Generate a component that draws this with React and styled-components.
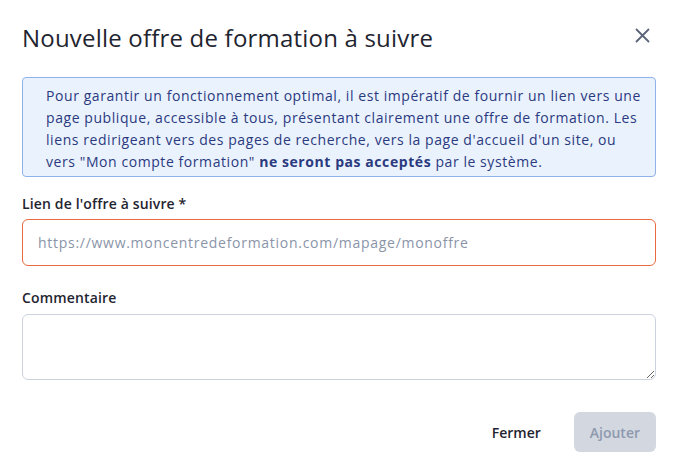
import React from 'react';
import styled, { createGlobalStyle } from 'styled-components';

const GlobalStyle = createGlobalStyle`
  html, body {
    margin: 0;
    padding: 0;
    background: #ffffff;
  }
  * {
    box-sizing: border-box;
  }
`;

const Modal = styled.div`
  width: 678px;
  height: 472px;
  padding: 19px 22px 0;
  font-family: 'Open Sans', 'Noto Sans', sans-serif;
  color: #1f2530;
  background: #fff;
`;

const Header = styled.div`
  display: flex;
  align-items: center;
  justify-content: space-between;
  height: 36px;
`;

const Title = styled.h2`
  margin: 0;
  font-size: 24px;
  font-weight: 400;
  letter-spacing: 0.2px;
  color: #1f2530;
`;

const CloseButton = styled.button`
  border: 0;
  background: none;
  padding: 0;
  width: 20px;
  height: 20px;
  margin: -4px 4px 0 0;
  color: #5b6478;
  display: flex;
  align-items: center;
  justify-content: center;
  cursor: pointer;
`;

const InfoBox = styled.div`
  margin-top: 22px;
  padding: 7px 6px 3px 23px;
  background: #eaf2fe;
  border: 1px solid #8fb1ea;
  border-radius: 4px;
  color: #2b3a7e;
  font-size: 14px;
  line-height: 22px;
  letter-spacing: 0.57px;
  white-space: nowrap;

  strong {
    font-weight: 700;
  }
`;

const Field = styled.div`
  margin-top: ${(p) => p.$top}px;
  display: flex;
  flex-direction: column;
  gap: ${(p) => p.$gap}px;
`;

const Label = styled.label`
  font-size: 14px;
  font-weight: 600;
  line-height: 20px;
  letter-spacing: 0.15px;
  color: #1f2530;
`;

const Input = styled.input`
  height: 47px;
  width: 100%;
  padding: 0 15px;
  border: 1px solid ${(p) => (p.$error ? '#e96a3f' : '#cbd3df')};
  border-radius: 6px;
  font-family: inherit;
  letter-spacing: 0.72px;
  font-size: 14px;
  color: #1f2530;
  outline: none;

  &::placeholder {
    color: #8a94a8;
  }
`;

const TextArea = styled.textarea`
  height: 66px;
  width: 100%;
  padding: 10px 15px;
  border: 1px solid #cbd3df;
  border-radius: 6px;
  font-family: inherit;
  font-size: 14px;
  outline: none;
  resize: vertical;
  display: block;
`;

const Footer = styled.div`
  margin-top: 32px;
  display: flex;
  justify-content: flex-end;
  align-items: center;
  gap: 17px;
`;

const Button = styled.button`
  height: 40px;
  padding: 0 16px;
  border: 0;
  border-radius: 6px;
  font-family: inherit;
  font-size: 14px;
  font-weight: 600;
  background: ${(p) => (p.$primary ? '#d2d7e0' : 'transparent')};
  color: ${(p) => (p.$primary ? '#8f99ae' : '#1f2530')};
  cursor: ${(p) => (p.disabled ? 'default' : 'pointer')};
`;

export default function App() {
  return (
    <>
      <GlobalStyle />
      <Modal>
        <Header>
          <Title>Nouvelle offre de formation à suivre</Title>
          <CloseButton aria-label="Fermer">
            <svg width="15" height="15" viewBox="0 0 15 15" fill="none" stroke="currentColor" strokeWidth="1.8" strokeLinecap="round">
              <path d="M1.5 1.5l12 12M13.5 1.5l-12 12" />
            </svg>
          </CloseButton>
        </Header>
        <InfoBox>
          Pour garantir un fonctionnement optimal, il est impératif de fournir un lien vers une
          <br />
          page publique, accessible à tous, présentant clairement une offre de formation. Les
          <br />
          liens redirigeant vers des pages de recherche, vers la page d'accueil d'un site, ou
          <br />
          vers "Mon compte formation" <strong>ne seront pas acceptés</strong> par le système.
        </InfoBox>
        <Field $top={17} $gap={5}>
          <Label>Lien de l'offre à suivre *</Label>
          <Input $error placeholder="https://www.moncentredeformation.com/mapage/monoffre" />
        </Field>
        <Field $top={22} $gap={6}>
          <Label>Commentaire</Label>
          <TextArea />
        </Field>
        <Footer>
          <Button>Fermer</Button>
          <Button $primary disabled>Ajouter</Button>
        </Footer>
      </Modal>
    </>
  );
}
